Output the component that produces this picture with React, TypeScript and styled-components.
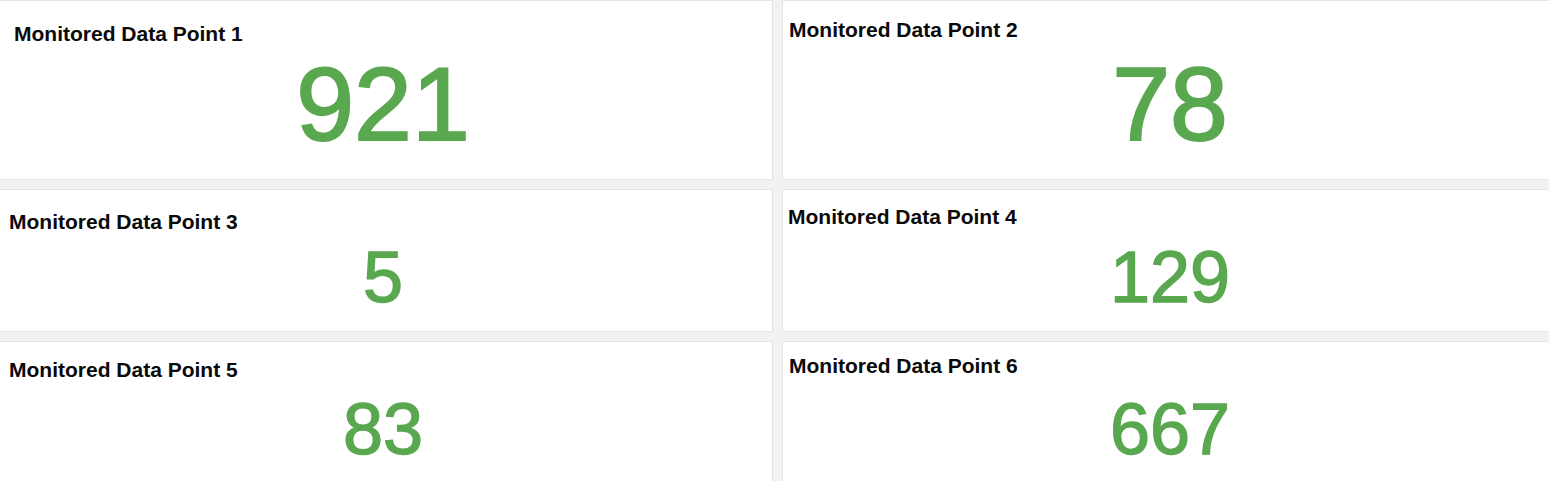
import React from "react";
import styled, { createGlobalStyle } from "styled-components";

const GlobalStyle = createGlobalStyle`
  html, body {
    margin: 0;
    padding: 0;
    background: #f1f3f2;
    overflow: hidden;
  }
`;

const Board = styled.div`
  display: grid;
  grid-template-columns: 780px 776px;
  grid-template-rows: 180px 143px 150px;
  gap: 9px;
  margin-left: -7px;
  width: 1565px;
`;

const Card = styled.div`
  display: flex;
  flex-direction: column;
  background: #ffffff;
  border: 1px solid #e3e5e4;
  box-sizing: border-box;
  overflow: hidden;
`;

const Header = styled.div<{ $top: number; $left: number }>`
  height: 51px;
  box-sizing: border-box;
  padding: ${(p) => p.$top}px 0 0 ${(p) => p.$left}px;
`;

const Title = styled.h2`
  margin: 0;
  font-family: "Liberation Sans", Arial, sans-serif;
  font-size: 21px;
  font-weight: bold;
  line-height: normal;
  color: #0a0a0a;
`;

const Value = styled.div<{ $size: number }>`
  font-family: "Liberation Sans", Arial, sans-serif;
  font-size: ${(p) => p.$size}px;
  line-height: 1;
  color: #59a84f;
  -webkit-text-stroke: ${(p) => (p.$size > 90 ? 2 : 1.4)}px #59a84f;
  text-align: center;
`;

type Point = {
  label: string;
  value: number;
  top: number;
  left: number;
  size: number;
};

const points: Point[] = [
  { label: "Monitored Data Point 1", value: 921, top: 21, left: 20, size: 104 },
  { label: "Monitored Data Point 2", value: 78, top: 17, left: 6, size: 104 },
  { label: "Monitored Data Point 3", value: 5, top: 20, left: 15, size: 72 },
  { label: "Monitored Data Point 4", value: 129, top: 15, left: 5, size: 72 },
  { label: "Monitored Data Point 5", value: 83, top: 16, left: 15, size: 72 },
  { label: "Monitored Data Point 6", value: 667, top: 12, left: 6, size: 72 },
];

const App: React.FC = () => (
  <>
    <GlobalStyle />
    <Board>
      {points.map((p) => (
        <Card key={p.label}>
          <Header $top={p.top} $left={p.left}>
            <Title>{p.label}</Title>
          </Header>
          <Value $size={p.size}>{p.value}</Value>
        </Card>
      ))}
    </Board>
  </>
);

export default App;
